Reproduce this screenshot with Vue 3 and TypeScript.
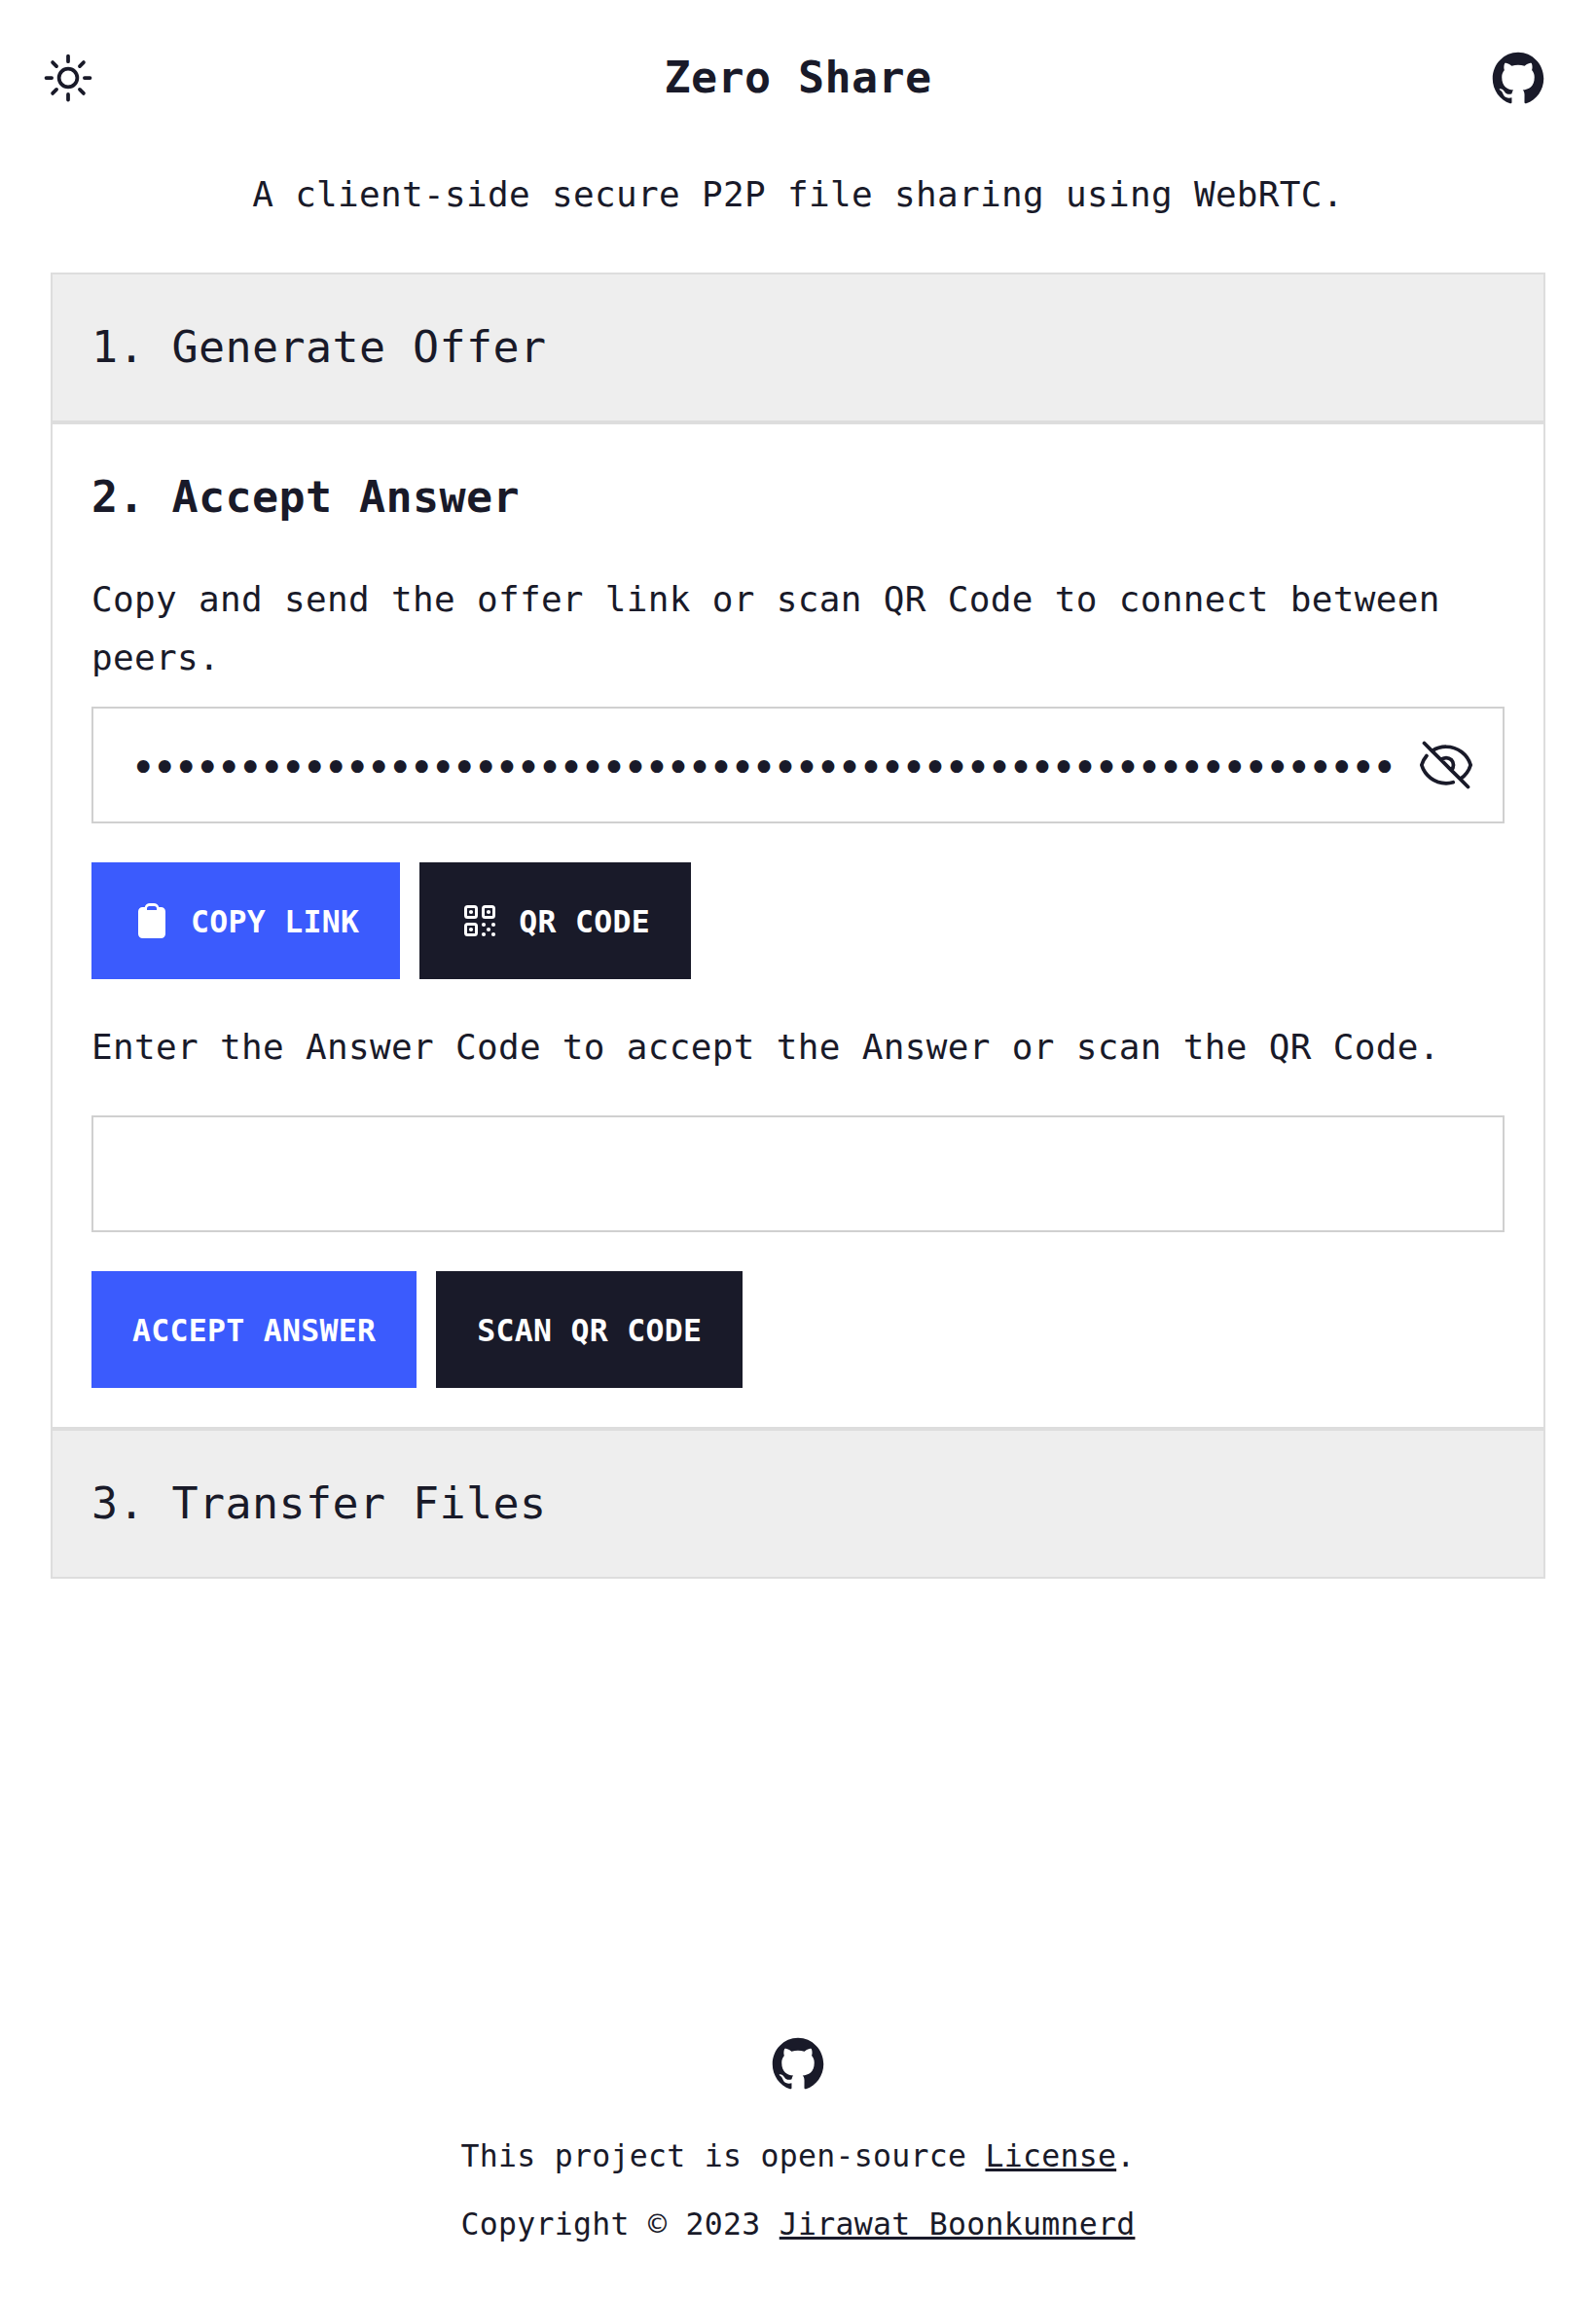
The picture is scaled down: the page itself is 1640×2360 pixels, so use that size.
<script setup lang="ts">
import { ref } from 'vue'

const offerLink = ref('•'.repeat(59))
const answerCode = ref('')

const githubPath =
  'M256 32C132.3 32 32 134.9 32 261.7c0 101.5 64.2 187.5 153.2 217.9a17.56 17.56 0 003.8.4c8.3 0 11.5-6.1 11.5-11.4 0-5.5-.2-19.9-.3-39.1a102.4 102.4 0 01-22.6 2.7c-43.1 0-52.9-33.5-52.9-33.5-10.2-26.5-24.9-33.6-24.9-33.6-19.5-13.7-.1-14.1 1.4-14.1h.1c22.5 2 34.3 23.8 34.3 23.8 11.2 19.6 26.2 25.1 39.6 25.1a63 63 0 0025.6-6c2-14.8 7.8-24.9 14.2-30.7-49.7-5.8-102-25.5-102-113.5 0-25.1 8.7-45.6 23-61.6-2.3-5.8-10-29.2 2.2-60.8a18.64 18.64 0 015-.5c8.1 0 26.4 3.1 56.6 24.1a208.21 208.21 0 01112.2 0c30.2-21 48.5-24.1 56.6-24.1a18.64 18.64 0 015 .5c12.2 31.6 4.5 55 2.2 60.8 14.3 16.1 23 36.6 23 61.6 0 88.2-52.4 107.6-102.3 113.3 8 7.1 15.2 21.1 15.2 42.5 0 30.7-.3 55.5-.3 63 0 5.4 3.1 11.5 11.4 11.5a19.35 19.35 0 004-.4C415.9 449.2 480 363.1 480 261.7 480 134.9 379.7 32 256 32z'

// Centres of the round modules in the QR icon: the three finders, then the loose dots
const qrDots: [number, number][] = [
  [11, 11], [29, 11], [11, 29],
  [24, 24], [34, 24], [29, 29], [24, 34], [34, 34],
]
</script>

<template>
  <div class="page">
    <header class="topbar">
      <svg class="icon line" viewBox="0 0 24 24">
        <path d="M12 3v2.25m6.364.386l-1.591 1.591M21 12h-2.25m-.386 6.364l-1.591-1.591M12 18.75V21m-4.773-4.227l-1.591 1.591M5.25 12H3m4.227-4.773L5.636 5.636M15.75 12a3.75 3.75 0 11-7.5 0 3.75 3.75 0 017.5 0z" />
      </svg>
      <h1>Zero Share</h1>
      <svg class="icon" viewBox="0 0 512 512"><path fill="currentColor" :d="githubPath" /></svg>
    </header>
    <p class="tagline">A client-side secure P2P file sharing using WebRTC.</p>

    <main class="steps">
      <section class="step closed"><h2>1. Generate Offer</h2></section>
      <section class="step">
        <h2 class="active">2. Accept Answer</h2>
        <div class="body">
          <p>Copy and send the offer link or scan QR Code to connect between peers.</p>
          <div class="field offer">
            <span class="dots">{{ offerLink }}</span>
            <svg class="icon line" viewBox="0 0 24 24">
              <path d="M3.98 8.223A10.477 10.477 0 001.934 12C3.226 16.338 7.244 19.5 12 19.5c.993 0 1.953-.138 2.863-.395M6.228 6.228A10.45 10.45 0 0112 4.5c4.756 0 8.773 3.162 10.065 7.498a10.523 10.523 0 01-4.293 5.774M6.228 6.228L3 3m3.228 3.228l3.65 3.65m7.894 7.894L21 21m-3.228-3.228l-3.65-3.65m0 0a3 3 0 10-4.243-4.243m4.242 4.242L9.88 9.88" />
            </svg>
          </div>
          <div class="actions">
            <button class="primary">
              <svg class="small" viewBox="0 0 40 40">
                <path fill="currentColor" fill-rule="evenodd" d="M10.500 6h2.200C13.500 3.600 15.500 2 18 2h4c2.500 0 4.500 1.600 5.300 4h2.200A4.500 4.500 0 0 1 34 10.500v23a4.500 4.500 0 0 1-4.500 4.500h-19A4.500 4.500 0 0 1 6 33.500v-23A4.500 4.500 0 0 1 10.500 6zM17.500 5A2.500 2.500 0 0 0 15 7.500V9h10V7.500A2.500 2.500 0 0 0 22.500 5z" />
              </svg>
              <span>COPY LINK</span>
            </button>
            <button class="dark">
              <svg class="small" viewBox="0 0 40 40">
                <g fill="none" stroke="currentColor" stroke-width="3">
                  <rect x="5.5" y="5.5" width="11" height="11" rx="2" />
                  <rect x="23.5" y="5.5" width="11" height="11" rx="2" />
                  <rect x="5.5" y="23.5" width="11" height="11" rx="2" />
                </g>
                <circle v-for="([x, y], i) in qrDots" :key="i" :cx="x" :cy="y" r="2.1" fill="currentColor" />
              </svg>
              <span>QR CODE</span>
            </button>
          </div>
          <p class="enter">Enter the Answer Code to accept the Answer or scan the QR Code.</p>
          <input v-model="answerCode" class="field" type="text" />
          <div class="actions">
            <button class="primary"><span>ACCEPT ANSWER</span></button>
            <button class="dark"><span>SCAN QR CODE</span></button>
          </div>
        </div>
      </section>
      <section class="step closed"><h2>3. Transfer Files</h2></section>
    </main>

    <footer>
      <svg class="icon" viewBox="0 0 512 512"><path fill="currentColor" :d="githubPath" /></svg>
      <p>This project is open-source <a>License</a>.</p>
      <p>Copyright © 2023 <a>Jirawat Boonkumnerd</a></p>
    </footer>
  </div>
</template>

<style>
body {
  margin: 0;
  background: #fff;
}
</style>

<style scoped>
.page {
  box-sizing: border-box;
  height: 2360px;
  display: flex;
  flex-direction: column;
  color: #191a29;
  font: 36px/60px Consolas, "DejaVu Sans Mono", monospace;
}
h1,
h2,
p {
  margin: 0;
  letter-spacing: 0.0089em;
}
.icon {
  display: block;
  width: 60px;
  height: 60px;
  flex: none;
}
.line path {
  fill: none;
  stroke: currentColor;
  stroke-width: 1.5;
  stroke-linecap: round;
  stroke-linejoin: round;
}
.topbar {
  display: flex;
  align-items: center;
  justify-content: space-between;
  padding: 40px 50px;
  height: 80px;
}
.topbar .line {
  margin: 0 10px 0 -10px;
}
h1,
h2 {
  font-size: 45px;
  line-height: 70px;
}
.tagline {
  text-align: center;
  padding: 10px 0 50px;
}
.steps {
  margin: 0 52px;
}
.step {
  border: 2px solid #ddd;
}
.closed {
  background: #eee;
}
h2 {
  padding: 40px;
  font-weight: 400;
}
.active {
  font-weight: 700;
}
.body {
  padding: 0 40px 40px;
}
.field {
  display: flex;
  box-sizing: border-box;
  align-items: center;
  width: 100%;
  height: 120px;
  border: 2px solid #d0d0d0;
  background: #fff;
  border-radius: 0;
}
.offer {
  margin-top: 20px;
  justify-content: space-between;
  padding: 0 28px 0 40px;
}
.dots {
  margin-left: -2px;
  padding-top: 6px;
  font-size: 44px;
  letter-spacing: calc(21.99px - 0.602em);
  white-space: nowrap;
}
.actions {
  display: flex;
  gap: 20px;
  margin-top: 40px;
}
button {
  display: flex;
  align-items: center;
  gap: 20px;
  height: 120px;
  padding: 0 42px;
  border: 0;
  color: #fff;
  font: 700 31.5px/60px Consolas, "DejaVu Sans Mono", monospace;
  letter-spacing: 0.0089em;
}
button span {
  padding-top: 2px;
}
.small {
  width: 40px;
  height: 40px;
}
.primary {
  background: #3b5bfd;
}
.dark {
  background: #191a29;
}
.enter {
  padding: 40px 0;
}
footer {
  margin-top: auto;
  display: flex;
  flex-direction: column;
  align-items: center;
  gap: 10px;
  padding-bottom: 45px;
  font-size: 31.5px;
}
footer .icon {
  margin-bottom: 25px;
}
a {
  text-decoration: underline;
  text-decoration-thickness: 3px;
  text-underline-offset: 2px;
  text-decoration-skip-ink: none;
}
</style>
